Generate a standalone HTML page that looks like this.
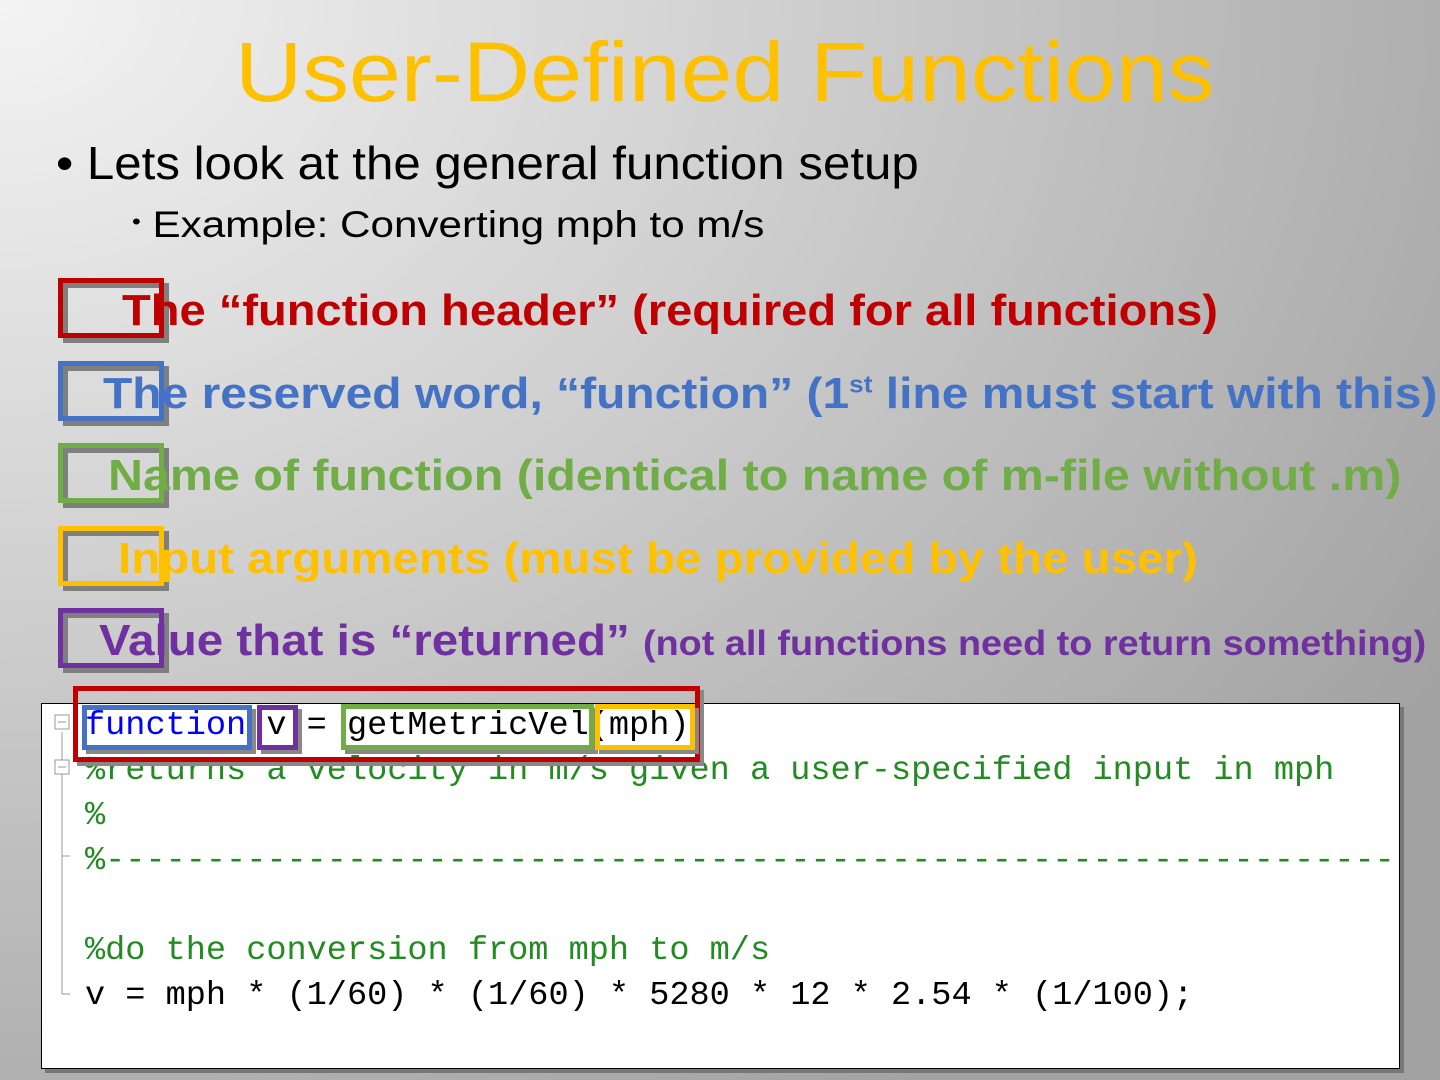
<!DOCTYPE html>
<html><head><meta charset="utf-8"><style>
html,body{margin:0;padding:0}
body{width:1440px;height:1080px;overflow:hidden;position:relative;
background:radial-gradient(ellipse 1700px 1300px at 0 0,#f4f4f4 0%,#d0d0d0 45%,#a2a2a2 100%);
font-family:"Liberation Sans",sans-serif}
.a{position:absolute;white-space:nowrap;transform-origin:0 0}
.t{left:235px;top:24px;font-size:84px;color:#ffc000;transform:scaleX(1.11)}
.b1{left:56px;top:136px;font-size:46px;color:#000;transform:scaleX(1.07)}
.b2{left:132px;top:204px;font-size:37px;color:#000;transform:scaleX(1.14)}
.l{font-size:44px;font-weight:bold}
.box{position:absolute;width:96px;height:50px;border:5px solid;box-shadow:5px 5px 0 #7f7f7f, inset 5px 5px 0 #7f7f7f}
.code{position:absolute;left:41px;top:703px;width:1357px;height:364px;background:#fff;border:1px solid #000;box-shadow:4px 4px 0 #777;overflow:hidden}
.c{position:absolute;font-family:"Liberation Mono",monospace;font-size:33.6px;white-space:pre;left:43px;font-family:"Liberation Serif","Liberation Mono",monospace}
.c{font-family:"Liberation Mono",monospace}
.g{color:#228b22}
.ib{position:absolute;border:5px solid;box-shadow:4px 4px 0 #888}
</style></head><body>
<div class="a t">User-Defined Functions</div>
<div class="a b1">• Lets look at the general function setup</div>
<div class="a b2"><span style="font-size:22px;vertical-align:8px">•</span> Example: Converting mph to m/s</div>

<div class="box" style="left:58px;top:278px;border-color:#c00000"></div>
<div class="a l" style="left:122px;top:286px;color:#c00000;transform:scaleX(1.07)">The “function header” (required for all functions)</div>
<div class="box" style="left:58px;top:361px;border-color:#4472c4"></div>
<div class="a l" style="left:103px;top:369px;color:#4472c4;transform:scaleX(1.09)">The reserved word, “function” (1<sup style="font-size:24px">st</sup> line must start with this)</div>
<div class="box" style="left:58px;top:443px;border-color:#70ad47"></div>
<div class="a l" style="left:108px;top:451px;color:#70ad47;transform:scaleX(1.1)">Name of function (identical to name of m-file without .m)</div>
<div class="box" style="left:58px;top:526px;border-color:#ffc000"></div>
<div class="a l" style="left:118px;top:534px;color:#ffc000;transform:scaleX(1.08)">Input arguments (must be provided by the user)</div>
<div class="box" style="left:58px;top:608px;border-color:#7030a0"></div>
<div class="a l" style="left:99px;top:616px;color:#7030a0;transform:scaleX(1.08)">Value that is “returned” <span style="font-size:35px">(not all functions need to return something)</span></div>

<div class="code">
<svg width="60" height="364" style="position:absolute;left:0;top:0">
<g stroke="#999" fill="#fff" stroke-width="1">
<line x1="20" y1="28" x2="20" y2="290"/><line x1="20" y1="290" x2="28" y2="290"/>
<line x1="20" y1="152" x2="28" y2="152"/>
<rect x="13" y="11" width="14" height="14"/><rect x="13" y="56" width="14" height="14"/>
<line x1="16" y1="18" x2="24" y2="18"/><line x1="16" y1="63" x2="24" y2="63"/>
</g></svg>
<div class="c" style="top:3px"><span style="color:#0000ff">function</span> v = getMetricVel(mph)</div>
<div class="c g" style="top:48px">%returns a velocity in m/s given a user-specified input in mph</div>
<div class="c g" style="top:93px">%</div>
<div class="c g" style="top:138px">%-----------------------------------------------------------------</div>
<div class="c g" style="top:228px">%do the conversion from mph to m/s</div>
<div class="c" style="top:273px">v = mph * (1/60) * (1/60) * 5280 * 12 * 2.54 * (1/100);</div>
</div>
<div class="ib" style="left:73px;top:686px;width:617px;height:66px;border-color:#c00000"></div>
<div class="ib" style="left:82px;top:705px;width:160px;height:35px;border-color:#4472c4"></div>
<div class="ib" style="left:257px;top:705px;width:31px;height:35px;border-color:#7030a0"></div>
<div class="ib" style="left:341px;top:704px;width:243px;height:36px;border-color:#70ad47"></div>
<div class="ib" style="left:595px;top:704px;width:90px;height:36px;border-color:#ffc000"></div>
</body></html>
